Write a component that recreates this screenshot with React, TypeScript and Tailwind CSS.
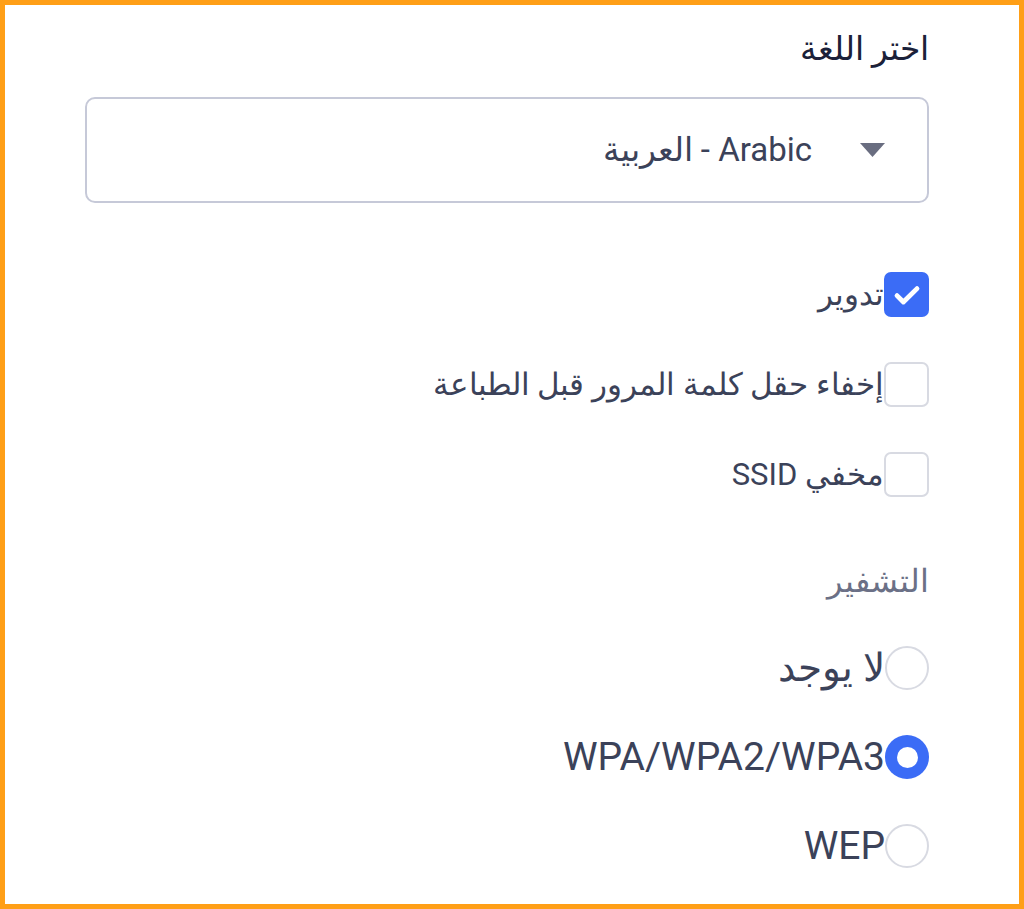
import { useState } from "react";

const options = [
  { id: "rotate", label: "تدوير", checked: true },
  { id: "hidePass", label: "إخفاء حقل كلمة المرور قبل الطباعة", checked: false },
  { id: "hiddenSsid", label: "مخفي SSID", checked: false },
];

const encryptions = ["لا يوجد", "WPA/WPA2/WPA3", "WEP"];

const CheckBox = ({ checked }: { checked: boolean }) =>
  checked ? (
    <span className="flex h-[45px] w-[45px] shrink-0 items-center justify-center rounded-[7px] bg-[#3b6cf6]">
      <svg width="32" height="32" viewBox="0 0 24 24" fill="none">
        <path
          d="M4.5 12.5l4.8 4.8L19.5 7.2"
          stroke="white"
          strokeWidth="3.6"
          strokeLinecap="round"
          strokeLinejoin="round"
        />
      </svg>
    </span>
  ) : (
    <span className="h-[45px] w-[45px] shrink-0 rounded-[7px] border-2 border-[#d8dae2] bg-white" />
  );

const Radio = ({ selected }: { selected: boolean }) =>
  selected ? (
    <span className="flex h-[44px] w-[44px] shrink-0 items-center justify-center rounded-full bg-[#3b6cf6]">
      <span className="h-[21px] w-[21px] rounded-full bg-white" />
    </span>
  ) : (
    <span className="h-[44px] w-[44px] shrink-0 rounded-full border-2 border-[#d8dae2] bg-white" />
  );

export default function App() {
  const [checks, setChecks] = useState(options.map((o) => o.checked));
  const [enc, setEnc] = useState(1);

  return (
    <div
      dir="rtl"
      className="h-[909px] w-[1024px] border-[5px] border-[#ff9f17] bg-white pl-[80px] pr-[90px] pt-[22px] font-['Roboto',sans-serif] text-[#3b4259]"
    >
      <div className="text-[33px] leading-[44px] text-[#1b2139]">اختر اللغة</div>

      <div className="mt-[26px] flex h-[106px] items-center rounded-[10px] border-2 border-[#c6c9d8] pr-[42px]">
        <svg width="25" height="14" viewBox="0 0 25 14" className="ml-[48px]">
          <path d="M0 0h25L12.5 14z" fill="#696d80" />
        </svg>
        <span className="text-[33px]">Arabic - العربية</span>
      </div>

      <div className="mt-[69px] flex flex-col gap-[45px]">
        {options.map((o, i) => (
          <label
            key={o.id}
            className="flex h-[45px] cursor-pointer items-center"
            onClick={() => setChecks(checks.map((c, j) => (j === i ? !c : c)))}
          >
            <CheckBox checked={checks[i]} />
            <span className="text-[31px] leading-none">{o.label}</span>
          </label>
        ))}
      </div>

      <div className="mt-[62px] text-[32px] leading-[44px] text-[#6b7086]">التشفير</div>

      <div className="mt-[43px] flex flex-col gap-[45px]">
        {encryptions.map((e, i) => (
          <label
            key={e}
            className="flex h-[44px] cursor-pointer items-center"
            onClick={() => setEnc(i)}
          >
            <Radio selected={enc === i} />
            <span className="text-[39px] leading-none">{e}</span>
          </label>
        ))}
      </div>
    </div>
  );
}
